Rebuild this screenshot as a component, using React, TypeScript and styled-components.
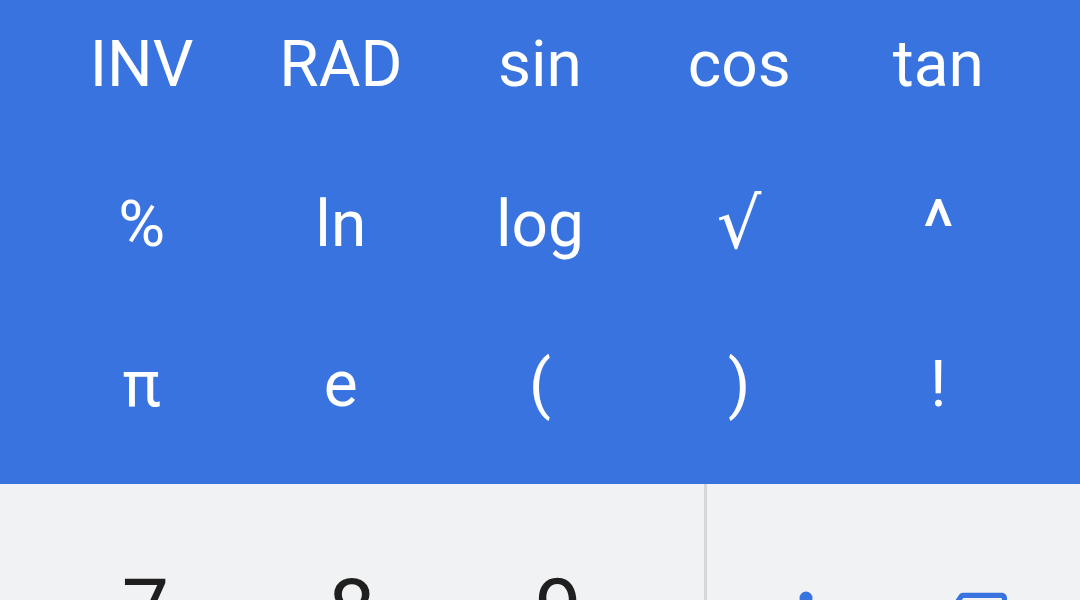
import React from 'react';
import styled, { createGlobalStyle } from 'styled-components';

const GlobalStyle = createGlobalStyle`
  html, body {
    margin: 0;
    padding: 0;
    height: 100%;
    overflow: hidden;
    background: #f1f2f4;
  }
  body {
    font-family: Roboto, "Noto Sans", sans-serif;
  }
`;

const ScScreen = styled.div`
  width: 1080px;
  height: 600px;
  display: flex;
  flex-direction: column;
  overflow: hidden;
`;

const ScSciPanel = styled.div`
  background: #3873e0;
  display: grid;
  grid-template-columns: repeat(5, 199.2px);
  grid-auto-rows: 130px;
  row-gap: 30px;
  padding: 0 42px 34px;
  flex: none;
`;

const ScSciKey = styled.button<{ $size?: number; $shift?: number; $font?: string }>`
  border: 0;
  background: none;
  padding: 0;
  margin: 0;
  color: #fff;
  font-family: ${(p) => p.$font ?? 'Roboto'}, "Noto Sans", sans-serif;
  font-size: ${(p) => p.$size ?? 64}px;
  font-weight: 400;
  line-height: 1;
  display: flex;
  align-items: center;
  justify-content: center;

  span {
    position: relative;
    top: ${(p) => p.$shift ?? 0}px;
  }
`;

const ScPad = styled.div`
  flex: 1;
  display: flex;
  background: #f1f2f4;
`;

const ScDigits = styled.div`
  width: 704px;
  display: grid;
  grid-template-columns: repeat(3, 206.5px);
  grid-auto-rows: 160px;
  padding: 45px 0 0 42px;
  box-sizing: border-box;
`;

const ScDigitKey = styled.button`
  border: 0;
  background: none;
  padding: 0;
  margin: 0;
  color: #1f1f1f;
  font-family: Roboto, "Noto Sans", sans-serif;
  font-size: 84px;
  font-weight: 400;
  display: flex;
  align-items: center;
  justify-content: center;
`;

const ScDivider = styled.div`
  width: 3px;
  background: #d6d7d9;
  flex: none;
`;

const ScOps = styled.div`
  flex: 1;
  display: grid;
  grid-template-columns: repeat(2, 170px);
  grid-auto-rows: 130px;
  padding: 67px 0 0 14px;
`;

const ScOpKey = styled.button`
  border: 0;
  background: none;
  padding: 0;
  margin: 0;
  color: #3873e0;
  display: flex;
  align-items: center;
  justify-content: center;
`;

type SciKey = { label: string; size?: number; shift?: number; font?: string };

const sciKeys: SciKey[] = [
  { label: 'INV' }, { label: 'RAD' }, { label: 'sin' }, { label: 'cos' }, { label: 'tan' },
  { label: '%' }, { label: 'ln' }, { label: 'log' },
  { label: '√', size: 70, shift: -1, font: '"DejaVu Sans"' },
  { label: '^', size: 76, shift: 2 },
  { label: 'π' }, { label: 'e' }, { label: '(' }, { label: ')' }, { label: '!' }
];

const digits = ['7', '8', '9'];

function DivideIcon() {
  return (
    <svg width="60" height="60" viewBox="0 0 60 60">
      <circle cx="30" cy="12" r="6.5" fill="currentColor" />
      <rect x="6" y="27" width="48" height="6" rx="3" fill="currentColor" />
      <circle cx="30" cy="48" r="6.5" fill="currentColor" />
    </svg>
  );
}

function BackspaceIcon() {
  return (
    <svg width="62" height="62" viewBox="0 0 24 24" fill="currentColor">
      <path d="M22 3H7c-.69 0-1.23.35-1.59.88L0 12l5.41 8.11c.36.53.9.89 1.59.89h15c1.1 0 2-.9 2-2V5c0-1.1-.9-2-2-2zm0 16H7.07L2.4 12l4.66-7H22v14zm-11.59-2L14 13.41 17.59 17 19 15.59 15.41 12 19 8.41 17.59 7 14 10.59 10.41 7 9 8.41 12.59 12 9 15.59z" />
    </svg>
  );
}

export default function App(): JSX.Element {
  return <>
    <GlobalStyle />
    <ScScreen>
      <ScSciPanel>
        {sciKeys.map((k) => (
          <ScSciKey key={k.label} $size={k.size} $shift={k.shift} $font={k.font}>
            <span>{k.label}</span>
          </ScSciKey>
        ))}
      </ScSciPanel>
      <ScPad>
        <ScDigits>
          {digits.map((d) => <ScDigitKey key={d}>{d}</ScDigitKey>)}
        </ScDigits>
        <ScDivider />
        <ScOps>
          <ScOpKey aria-label="divide"><DivideIcon /></ScOpKey>
          <ScOpKey aria-label="backspace"><BackspaceIcon /></ScOpKey>
        </ScOps>
      </ScPad>
    </ScScreen>
  </>;
}
